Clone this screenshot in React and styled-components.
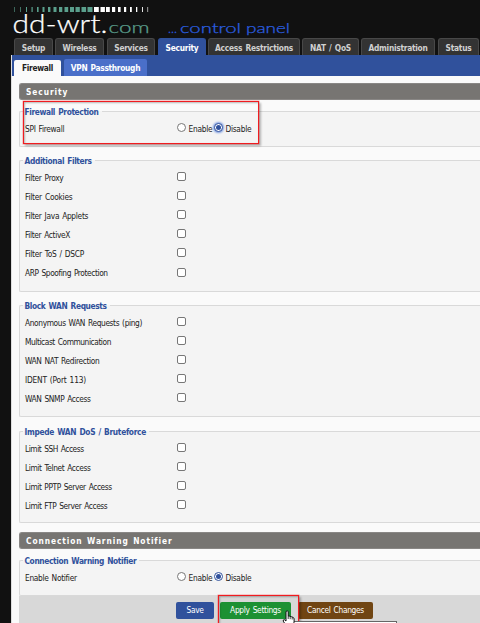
import React from 'react';
import styled, { createGlobalStyle } from 'styled-components';

const Global = createGlobalStyle`
  * { box-sizing: border-box; }
  body {
    margin: 0;
    background: #111;
    overflow: hidden;
    font: 8.3px/12px "DejaVu Sans Condensed", "DejaVu Sans", sans-serif;
    font-stretch: condensed;
    word-spacing: 0.9px;
    color: #222;
  }
`;

const Page = styled.div`
  position: relative;
  width: 480px;
  height: 623px;
  overflow: hidden;
  background: #111;
`;
const Header = styled.header`
  height: 38px;
  svg { display: block; }
`;
const MainNav = styled.nav`
  display: flex;
  height: 17px;
  padding-left: 14px;
`;
const MainTab = styled.a`
  flex: none;
  width: ${p => p.$w}px;
  margin-right: ${p => p.$gap ?? 2}px;
  border: 1px solid ${p => (p.$active ? '#30519c' : '#484848')};
  border-bottom: 0;
  border-radius: 3px 3px 0 0;
  background: ${p => (p.$active ? '#30519c' : '#333')};
  color: ${p => (p.$active ? '#fff' : '#d0d0d0')};
  font-weight: 700;
  font-size: 8.3px;
  line-height: 18px;
  text-align: center;
  white-space: nowrap;
  letter-spacing: -0.25px;
`;
const Body = styled.main`
  margin-left: 11px;
  height: 568px;
  border-left: 1px solid #dedede;
  background: #fafafa;
`;
const SubNav = styled.nav`
  display: flex;
  align-items: flex-end;
  height: 21px;
  padding-left: 2px;
  background: #30519c;
`;
const SubTab = styled.a`
  width: ${p => p.$w}px;
  height: ${p => (p.$active ? 16 : 17)}px;
  margin-right: 3px;
  border-radius: 2px 2px 0 0;
  background: ${p => (p.$active ? '#fafafa' : '#4a6fc9')};
  color: ${p => (p.$active ? '#222' : '#fff')};
  font-weight: 700;
  font-size: 8.3px;
  line-height: ${p => (p.$active ? 17 : 18)}px;
  text-align: center;
  white-space: nowrap;
  letter-spacing: -0.3px;
`;
const Content = styled.div`
  padding: 7px 0 0 7px;
`;
const Bar = styled.h2`
  height: 17px;
  margin: ${p => p.$mt ?? 0}px 0 0;
  padding-left: 6px;
  border: 1px solid #898785;
  border-right: 0;
  border-radius: 3px 0 0 3px;
  background: #777572;
  color: #fff;
  font-size: 8.3px;
  line-height: 16px;
  letter-spacing: 0.93px;
`;
const Group = styled.fieldset`
  height: ${p => p.$h}px;
  margin: ${p => p.$mt}px 0 0;
  padding: 1px 0 0 5px;
  border: 1px solid #d9d9d9;
  border-right: 0;
  border-radius: 2px 0 0 2px;
  background: #f4f4f4;
  min-width: 0;
`;
const Legend = styled.legend`
  height: 12px;
  margin-left: -2px;
  padding: 1px 3px 0 1.5px;
  color: #30519c;
  font-weight: 700;
  letter-spacing: ${p => p.$ls ?? -0.36}px;
`;
const Row = styled.div`
  display: flex;
  align-items: center;
  height: 19.1px;
`;
const Label = styled.span`
  flex: none;
  width: 152px;
  padding-top: 2px;
  white-space: nowrap;
  letter-spacing: ${p => p.$ls ?? -0.3}px;
`;
const Check = styled.span`
  width: 9px;
  height: 9px;
  border: 1px solid #777;
  border-radius: 2px;
  background: #fff;
`;
const Radio = styled.span`
  display: grid;
  place-items: center;
  flex: none;
  width: 9px;
  height: 9px;
  border: 1px solid ${p => (p.$on ? '#30519c' : '#777')};
  border-radius: 50%;
  background: #fff;
  box-shadow: ${p => (p.$focus ? '0 0 2px 1px #7d9ce0' : 'none')};
  &::after {
    content: '';
    width: 5px;
    height: 5px;
    border-radius: 50%;
    background: ${p => (p.$on ? '#30519c' : 'transparent')};
  }
`;
const RadioText = styled.span`
  width: ${p => p.$w}px;
  padding: 2px 0 0 ${p => p.$pl}px;
  white-space: nowrap;
  letter-spacing: -0.28px;
`;
const Footer = styled.footer`
  display: flex;
  height: 40px;
  padding: 6px 0 0 157px;
  background: #d8d8d8;
`;
const Button = styled.button`
  width: ${p => p.$w}px;
  height: 17px;
  margin: 0 ${p => p.$gap ?? 0}px 0 0;
  padding: 0;
  border: 0;
  border-radius: 2px;
  background: ${p => p.$bg};
  color: #fff;
  font: inherit;
  line-height: 17px;
  white-space: nowrap;
  word-spacing: 0.9px;
  letter-spacing: -0.3px;
`;
const Highlight = styled.div`
  position: absolute;
  left: ${p => p.$x}px;
  top: ${p => p.$y}px;
  width: ${p => p.$w}px;
  height: ${p => p.$h}px;
  border: 1px solid #f01c20;
  box-shadow: 0 0 0 0.5px #f01c2066, 2px 2px 2px #0004, inset 1px 1px 2px #0004;
`;
const Tooltip = styled.div`
  position: absolute;
  left: 290px;
  top: 621px;
  width: 107px;
  height: 14px;
  border: 1px solid #666;
  background: #fff;
`;
const Cursor = styled.svg`
  position: absolute;
  left: 282px;
  top: 610px;
`;

const ticks = [
  [14, 0.6], [20, 0.7], [26, 1], [31.5, 1.2], [37, 1.6], [42.5, 2], [48, 2.4],
  [53.5, 3], [59, 3.3], [64.5, 3.7], [70, 4], [75.5, 4.3], [81.5, 4.6], [87.5, 5],
  [94, 4.8], [100.5, 4.4], [106, 3.8], [112, 3.2], [118, 2.6], [124, 2.2],
  [130, 1.8], [136, 1.3], [142, 0.9], [147.5, 0.6],
];

const words = [
  ['dd-wrt.', 12.5, 95, 25.5, '#fff'],
  ['com', 108.5, 41, 15, '#5a9f8c'],
  ['...', 168, 9, 13, '#2b5fe0'],
  ['control', 180, 61, 14, '#2b5fe0'],
  ['panel', 246, 44, 14, '#2b5fe0'],
];

function Logo() {
  return (
    <svg width="480" height="38">
      {ticks.map(([x, w], i) => (
        <rect key={x} x={x} y="7" width={w} height="5" fill={i < 14 ? '#5a9f8c' : '#fff'} />
      ))}
      <g fontFamily="Lato, sans-serif" fontWeight="300" fontStretch="normal" wordSpacing="0">
        {words.map(([t, x, w, size, fill]) => (
          <text key={t} x={x} y="32.5" fontSize={size} fill={fill} stroke={fill} strokeWidth="0.25" textLength={w} lengthAdjust="spacingAndGlyphs">{t}</text>
        ))}
      </g>
    </svg>
  );
}

const tabs = [
  ['Setup', 39, 2], ['Wireless', 49, 3], ['Services', 48, 3], ['Security', 48, 2],
  ['Access Restrictions', 92, 2], ['NAT / QoS', 57, 2], ['Administration', 74, 3], ['Status', 41, 0],
];

const filters = [
  ['Filter Proxy'], ['Filter Cookies', -0.25], ['Filter Java Applets', -0.3],
  ['Filter ActiveX', -0.35], ['Filter ToS / DSCP', -0.26], ['ARP Spoofing Protection', -0.4],
];
const wanRequests = [
  ['Anonymous WAN Requests (ping)', -0.37], ['Multicast Communication', -0.43],
  ['WAN NAT Redirection', -0.34], ['IDENT (Port 113)', -0.2], ['WAN SNMP Access', -0.36],
];
const bruteforce = [
  ['Limit SSH Access', -0.44], ['Limit Telnet Access', -0.38],
  ['Limit PPTP Server Access', -0.4], ['Limit FTP Server Access', -0.4],
];

const Options = ({ items }) => items.map(([t, ls]) => (
  <Row key={t}><Label $ls={ls}>{t}</Label><Check /></Row>
));
const Toggle = ({ label, focus }) => (
  <Row>
    <Label $ls={-0.3}>{label}</Label>
    <Radio /><RadioText $w={28} $pl={2.5}>Enable</RadioText>
    <Radio $on $focus={focus} /><RadioText $w={40} $pl={2.5}>Disable</RadioText>
  </Row>
);

export default function App() {
  return (
    <Page>
      <Global />
      <Header><Logo /></Header>
      <MainNav>
        {tabs.map(([t, w, gap]) => (
          <MainTab key={t} $w={w} $gap={gap} $active={t === 'Security'}>{t}</MainTab>
        ))}
      </MainNav>
      <Body>
        <SubNav>
          <SubTab $w={47} $active>Firewall</SubTab>
          <SubTab $w={83}>VPN Passthrough</SubTab>
        </SubNav>
        <Content>
          <Bar>Security</Bar>
          <Group $mt={5} $h={42}>
            <Legend>Firewall Protection</Legend>
            <Toggle label="SPI Firewall" focus />
          </Group>
          <Group $mt={7} $h={138}>
            <Legend>Additional Filters</Legend>
            <Options items={filters} />
          </Group>
          <Group $mt={7} $h={118}>
            <Legend>Block WAN Requests</Legend>
            <Options items={wanRequests} />
          </Group>
          <Group $mt={8} $h={98}>
            <Legend $ls={-0.3}>Impede WAN DoS / Bruteforce</Legend>
            <Options items={bruteforce} />
          </Group>
          <Bar $mt={9}>Connection Warning Notifier</Bar>
          <Group $mt={5} $h={42}>
            <Legend>Connection Warning Notifier</Legend>
            <Toggle label="Enable Notifier" />
          </Group>
          <Footer>
            <Button $w={38} $gap={6} $bg="#30519c">Save</Button>
            <Button $w={71} $gap={7} $bg="#1c9133">Apply Settings</Button>
            <Button $w={75} $bg="#704513">Cancel Changes</Button>
          </Footer>
        </Content>
      </Body>
      <Highlight $x={23} $y={101} $w={236} $h={43} />
      <Highlight $x={218} $y={595} $w={81} $h={40} />
      <Tooltip />
      <Cursor width="14" height="18" viewBox="0 0 14 18">
        <path d="M4 1.5Q5.2.2 6.2 1.5V6l1.4.2 1.8.5 1.8.7q.9.5.9 1.6v3l-1.4 5.2H5L1.3 11.2q-.5-1.6 1.1-1.5L4 11Z" fill="#fff" stroke="#111" strokeWidth="1" />
        <path d="M6.2 6v3M8.2 6.6v2.6M10.2 7.2v2.3" stroke="#111" strokeWidth=".8" />
      </Cursor>
    </Page>
  );
}
